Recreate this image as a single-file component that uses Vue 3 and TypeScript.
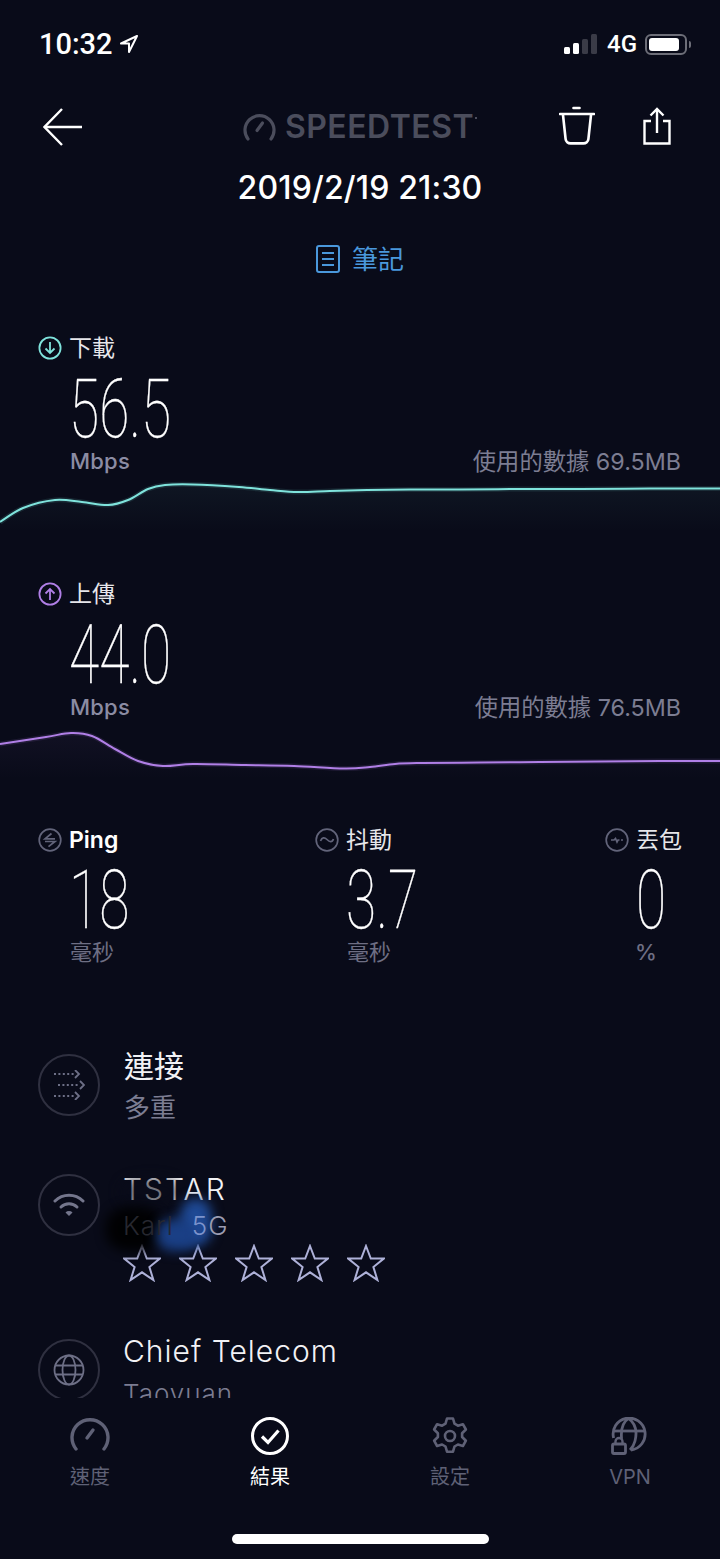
<script setup lang="ts">
type Point = [number, number]

// catmull-rom through the sampled points, good enough for the result curves
function smooth(points: Point[]): string {
  let d = `M${points[0][0]} ${points[0][1]}`
  for (let i = 0; i < points.length - 1; i++) {
    const p0 = points[i - 1] || points[i]
    const p1 = points[i]
    const p2 = points[i + 1]
    const p3 = points[i + 2] || p2
    const c1x = p1[0] + (p2[0] - p0[0]) / 6
    const c1y = p1[1] + (p2[1] - p0[1]) / 6
    const c2x = p2[0] - (p3[0] - p1[0]) / 6
    const c2y = p2[1] - (p3[1] - p1[1]) / 6
    d += ` C${c1x.toFixed(1)} ${c1y.toFixed(1)} ${c2x.toFixed(1)} ${c2y.toFixed(1)} ${p2[0]} ${p2[1]}`
  }
  return d
}

const downloadPoints: Point[] = [
  [0, 47], [23, 33], [55, 25], [82, 27], [108, 30], [128, 25], [148, 14], [165, 10], [193, 9.5],
  [239, 12], [270, 15], [298, 17], [330, 16], [367, 15], [410, 14.5], [459, 14.5], [520, 14],
  [580, 14], [650, 13.5], [720, 13.5]
]
const uploadPoints: Point[] = [
  [0, 23], [46, 16], [71, 12], [92, 15], [115, 28], [138, 40], [163, 45], [193, 43],
  [245, 44], [294, 45], [344, 47.5], [370, 46], [395, 43], [422, 42], [480, 41.5],
  [540, 41], [600, 40.5], [660, 40], [720, 40]
]

const results = [
  {
    key: 'down',
    label: '下載',
    value: '56.5',
    used: '使用的數據 69.5MB',
    color: '#7fe3dc',
    line: smooth(downloadPoints)
  },
  {
    key: 'up',
    label: '上傳',
    value: '44.0',
    used: '使用的數據 76.5MB',
    color: '#b07fe6',
    line: smooth(uploadPoints)
  }
]

const stats = [
  { key: 'ping', label: 'Ping', value: '18', unit: '毫秒' },
  { key: 'jitter', label: '抖動', value: '3.7', unit: '毫秒' },
  { key: 'loss', label: '丟包', value: '0', unit: '%' }
]

const tabs = [
  { key: 'speed', label: '速度' },
  { key: 'result', label: '結果' },
  { key: 'settings', label: '設定' },
  { key: 'vpn', label: 'VPN' }
]
</script>

<template>
  <div class="page">
    <div class="content">
      <div class="status">
        <div class="time">
          <span>10:32</span>
          <svg width="20" height="20" viewBox="0 0 20 20" fill="none" stroke="#fff" stroke-width="2" stroke-linejoin="round">
            <path d="M18 2 2 9.5h8V18z" />
          </svg>
        </div>
        <div class="status-right">
          <div class="signal">
            <i class="bar b1"></i>
            <i class="bar b2"></i>
            <i class="bar b3"></i>
            <i class="bar b4"></i>
          </div>
          <span class="net">4G</span>
          <div class="battery"><i></i></div>
          <i class="nub"></i>
        </div>
      </div>

      <div class="topbar">
        <svg class="back" width="40" height="38" viewBox="0 0 40 38" fill="none" stroke="#fff" stroke-width="2.4">
          <path d="M39 19H2" />
          <path d="M19 1 1.5 19 19 37" />
        </svg>
        <div class="logo">
          <svg width="33" height="28" viewBox="0 0 33 28" fill="none" stroke="#4b4d5c" stroke-width="3.2" stroke-linecap="round">
            <path d="M5 26A14.500 14.500 0 1 1 28 26" />
            <path d="M14 17.500 19.500 10" />
          </svg>
          <span class="logo-text">SPEEDTEST</span>
          <i class="logo-mark"></i>
        </div>
        <div class="actions">
          <svg width="36" height="40" viewBox="0 0 36 40" fill="none" stroke="#fff" stroke-width="2.6" stroke-linecap="round">
            <path d="M14.5 2h6" />
            <path d="M1 8h34" />
            <path d="M4 9l2.6 24a5 5 0 0 0 5 4.4h12.800a5 5 0 0 0 5-4.400L32 9" />
          </svg>
          <svg width="28" height="38" viewBox="0 0 28 38" fill="none" stroke="#fff" stroke-width="2.4">
            <path d="M14 26V2" />
            <path d="M7.5 8.5 14 2l6.5 6.5" />
            <path d="M8 14H1.5v22.500h25V14H20" />
          </svg>
        </div>
      </div>

      <div class="date">2019/2/19 21:30</div>

      <div class="notes">
        <svg width="24" height="28" viewBox="0 0 24 28" fill="none" stroke="#4a98dc" stroke-width="2">
          <rect x="1" y="1" width="22" height="26" rx="2" />
          <path d="M6 8h12M6 14h12M6 20h12" />
        </svg>
        <span>筆記</span>
      </div>

      <section v-for="r in results" :key="r.key" class="result">
        <div class="head">
          <svg width="24" height="24" viewBox="0 0 24 24" fill="none" :stroke="r.color" stroke-width="1.8">
            <circle cx="12" cy="12" r="10.6" />
            <path v-if="r.key === 'down'" d="M12 6v11M7.5 12.500 12 17l4.500-4.500" />
            <path v-else d="M12 18V7M7.5 11.500 12 7l4.500 4.500" />
          </svg>
          <span>{{ r.label }}</span>
        </div>
        <div class="big big-result">{{ r.value }}</div>
        <div class="meta">
          <span class="mbps">Mbps</span>
          <span class="used">{{ r.used }}</span>
        </div>
        <svg class="chart" width="720" height="104" viewBox="0 0 720 104" fill="none">
          <defs>
            <linearGradient :id="'fade-' + r.key" x1="0" y1="0" x2="0" y2="1">
              <stop offset="0" :stop-color="r.color" stop-opacity="0.05" />
              <stop offset="0.5" :stop-color="r.color" stop-opacity="0" />
            </linearGradient>
          </defs>
          <path :d="r.line + ' V104 H0 Z'" :fill="'url(#fade-' + r.key + ')'" />
          <path :d="r.line" :stroke="r.color" stroke-width="5" stroke-opacity="0.12" />
          <path :d="r.line" :stroke="r.color" stroke-width="2" />
        </svg>
      </section>

      <div class="stats">
        <div v-for="s in stats" :key="s.key" class="stat">
          <div class="stat-head">
            <svg width="24" height="24" viewBox="0 0 24 24" fill="none" stroke="#62647a" stroke-width="1.7">
              <circle cx="12" cy="12" r="10.8" />
              <template v-if="s.key === 'ping'">
                <path d="M13.5 5.500 7 10.800h10" />
                <path d="M7 13.500h10l-6.500 5.200" />
              </template>
              <path v-else-if="s.key === 'jitter'" d="M5.5 13c1.500-4 4-4 6.500-1.500S17 15 18.500 11" />
              <path v-else d="M6 12h3l1.500-1.500L12 14l1-2h1.500M16 12h2" />
            </svg>
            <span :class="s.key === 'ping' ? 'latin' : 'cjk'">{{ s.label }}</span>
          </div>
          <div class="big big-stat">{{ s.value }}</div>
          <div class="unit" :class="{ percent: s.key === 'loss' }">{{ s.unit }}</div>
        </div>
      </div>

      <div class="list">
        <div class="row">
          <div class="circle">
            <svg width="32" height="30" viewBox="0 0 32 30" fill="none" stroke="#6d6f86" stroke-width="1.8">
              <path d="M1 4h21" stroke-dasharray="2 2.4" />
              <path d="M5 15h21" stroke-dasharray="2 2.4" />
              <path d="M1 26h21" stroke-dasharray="2 2.4" />
              <path d="M22 0l4 4-4 4M27 11l4 4-4 4M22 22l4 4-4 4" />
            </svg>
          </div>
          <div>
            <div class="title">連接</div>
            <div class="sub">多重</div>
          </div>
        </div>

        <div class="row row-isp">
          <div class="circle circle-isp">
            <svg width="32" height="24" viewBox="0 0 32 24" fill="none" stroke="#74768c" stroke-width="3" stroke-linecap="round">
              <path d="M2 8a20 20 0 0 1 28 0" />
              <path d="M8 14a11.500 11.500 0 0 1 16 0" />
              <path d="M16 23l-3.500-3.500a5 5 0 0 1 7 0z" fill="#74768c" stroke="none" />
            </svg>
          </div>
          <div class="isp-text">
            <div class="title title-latin isp-title">TSTAR</div>
            <div class="sub sub-latin isp-sub"><span class="karl">Karl</span><span class="band">5</span><span class="band-g">G</span></div>
            <div class="stars">
              <svg v-for="n in 5" :key="n" width="38" height="38" viewBox="0 0 38 38" fill="none" stroke="#aeb1d8" stroke-width="2" stroke-linejoin="miter">
                <path d="M19 2l4.800 12.600h13L26.400 23l4 13L19 28.300 7.600 36l4-13L1.200 14.600h13z" />
              </svg>
            </div>
            <i class="smudge dim"></i>
            <i class="smudge dark"></i>
            <i class="smudge blue"></i>
            <i class="smudge blue-low"></i>
          </div>
        </div>

        <div class="row">
          <div class="circle circle-server">
            <svg width="32" height="32" viewBox="0 0 32 32" fill="none" stroke="#6d6f86" stroke-width="1.8">
              <circle cx="16" cy="16" r="14.5" />
              <ellipse cx="16" cy="16" rx="6.5" ry="14.5" />
              <path d="M2 11.500h28M2 20.500h28" />
            </svg>
          </div>
          <div>
            <div class="title title-latin">Chief Telecom</div>
            <div class="sub sub-latin server-sub">Taoyuan</div>
          </div>
        </div>
      </div>
    </div>

    <div class="tabbar">
      <div class="tabs">
        <div v-for="t in tabs" :key="t.key" class="tab" :class="{ active: t.key === 'result' }">
          <svg v-if="t.key === 'speed'" width="40" height="38" viewBox="0 0 40 38" fill="none" stroke="#5f6176" stroke-width="3.4" stroke-linecap="round">
            <path d="M6 32A18 18 0 1 1 34 32" />
            <path d="M17 21l6-8" />
          </svg>
          <svg v-else-if="t.key === 'result'" width="40" height="38" viewBox="0 0 40 38" fill="none" stroke="#fff" stroke-width="3">
            <circle cx="20" cy="19" r="17.5" />
            <path d="M12 19.500l6 6 10.500-12" stroke-width="3.2" />
          </svg>
          <svg v-else-if="t.key === 'settings'" width="40" height="38" viewBox="0 0 40 38" fill="none" stroke="#5f6176" stroke-width="2.6" stroke-linejoin="round">
            <path d="M17 1.500h6l1.500 5.200 3.400 2 5-1.500 3 5.300-3.800 3.700v3.800l3.800 3.700-3 5.300-5-1.500-3.400 2-1.500 5.200h-6l-1.500-5.200-3.400-2-5 1.500-3-5.300 3.800-3.700v-3.800l-3.800-3.700 3-5.300 5 1.500 3.400-2z" />
            <circle cx="20" cy="19" r="5" />
          </svg>
          <svg v-else width="40" height="38" viewBox="0 0 40 38" fill="none" stroke="#5f6176" stroke-width="2.8">
            <path d="M3.600 21A16 16 0 1 1 21 33" />
            <path d="M11.600 22C10.500 11 13 5 18.500 1.400 25 6 27.500 14 25 24c-1 4-3 7-5 9" />
            <path d="M3 14h31" />
            <rect x="2.500" y="27" width="13" height="9.500" rx="1.500" />
            <path d="M5.500 27v-2.500a3.500 3.500 0 0 1 7 0V27" stroke-width="2.4" />
          </svg>
          <span>{{ t.label }}</span>
        </div>
      </div>
      <div class="home"></div>
    </div>
  </div>
</template>

<style>
html,
body {
  margin: 0;
  background: #090b19;
}
</style>

<style scoped>
.page {
  width: 720px;
  height: 1559px;
  display: flex;
  flex-direction: column;
  overflow: hidden;
  background: #090b19;
  color: #fff;
  font-family: Inter, "Noto Sans CJK TC", sans-serif;
}

.content {
  flex: 1;
  min-height: 0;
  overflow: hidden;
}

.status {
  height: 88px;
  display: flex;
  align-items: center;
  justify-content: space-between;
  padding: 0 29px 0 39px;
}

.time {
  display: flex;
  align-items: center;
  gap: 6px;
  font-family: Roboto, sans-serif;
  font-weight: 500;
  font-size: 29px;
}

.status-right {
  display: flex;
  align-items: center;
}

.signal {
  display: flex;
  align-items: flex-end;
  gap: 3px;
  height: 20px;
  margin-right: 10px;
}

.bar {
  width: 6px;
  border-radius: 1.5px;
  background: #fff;
}

.b1 { height: 7px; }
.b2 { height: 11px; }
.b3 { height: 15px; background: #3a3b47; }
.b4 { height: 20px; background: #3a3b47; }

.net {
  font-family: Roboto, sans-serif;
  font-weight: 500;
  font-size: 24px;
  margin-right: 8px;
}

.battery {
  box-sizing: border-box;
  width: 42px;
  height: 21px;
  border: 2px solid #6d6e78;
  border-radius: 6px;
  padding: 2px;
}

.battery i {
  display: block;
  width: 30px;
  height: 13px;
  border-radius: 3px;
  background: #fff;
}

.nub {
  width: 2px;
  height: 7px;
  margin-left: 2px;
  border-radius: 0 2px 2px 0;
  background: #6d6e78;
}

.topbar {
  margin-top: 20px;
  height: 38px;
  padding: 0 46px;
  display: grid;
  grid-template-columns: 1fr auto 1fr;
  align-items: center;
}

.back {
  margin-left: -3px;
}

.logo {
  display: flex;
  align-items: center;
  color: #4b4d5c;
}

.logo-text {
  margin-left: 9px;
  font-size: 32px;
  font-weight: 600;
  letter-spacing: 0.5px;
  line-height: 38px;
}

.logo-mark {
  width: 2px;
  height: 2px;
  margin: -18px 0 0 1px;
  background: #4b4d5c;
}

.actions {
  justify-self: end;
  display: flex;
  align-items: center;
  gap: 48px;
  margin: -2px 3px 0 0;
}

.date {
  margin-top: 22px;
  text-align: center;
  font-size: 32px;
  letter-spacing: 0.15px;
  font-weight: 500;
  line-height: 40px;
}

.notes {
  margin-top: 36px;
  height: 30px;
  display: flex;
  align-items: center;
  justify-content: center;
  gap: 12px;
  color: #4a98dc;
  font-size: 26px;
}

.notes span {
  margin-bottom: 4px;
}

.notes + .result {
  margin-top: 59px;
}

.head {
  height: 30px;
  padding-left: 38px;
  display: flex;
  align-items: center;
  gap: 7px;
  font-size: 23px;
  color: #e6e6ea;
}

.head span,
.stat-head .cjk {
  margin-bottom: 4px;
}

.big {
  font-family: Roboto, sans-serif;
  font-weight: 100;
  -webkit-text-stroke: 0.3px #fff;
  line-height: 58px;
  height: 58px;
  transform: scaleX(0.68);
  transform-origin: left center;
  white-space: nowrap;
}

.big-result {
  margin: 18px 0 0 69px;
  font-size: 81px;
}

.meta {
  height: 28px;
  margin-top: 8px;
  padding: 0 39px 0 70px;
  display: flex;
  align-items: center;
  justify-content: space-between;
}

.mbps {
  font-size: 22px;
  font-weight: 500;
  letter-spacing: 0.2px;
  color: #8b8ca3;
}

.used {
  font-size: 23.3px;
  color: #7c7d92;
  margin-top: -3px;
}

.chart {
  display: block;
}

.stats {
  display: grid;
  grid-template-columns: 277px 290px auto;
  padding-left: 38px;
}

.stat-head {
  height: 30px;
  display: flex;
  align-items: center;
  gap: 7px;
  font-size: 23px;
  color: #e6e6ea;
}

.stat-head .latin {
  font-weight: 600;
  color: #fff;
}

.big-stat {
  margin: 17px 0 0 31px;
  font-size: 81px;
}

.unit {
  height: 28px;
  margin: 8px 0 0 32px;
  line-height: 28px;
  font-size: 22px;
  color: #6e6f84;
}

.unit.percent {
  margin-left: 30px;
  font-weight: 500;
}

.list {
  margin-top: 80px;
  padding-left: 38px;
  display: flex;
  flex-direction: column;
  gap: 41px;
}

.row {
  display: flex;
  align-items: flex-start;
  gap: 24px;
}

.row-isp {
  padding-bottom: 8px;
}

.circle {
  box-sizing: border-box;
  flex-shrink: 0;
  width: 62px;
  height: 62px;
  margin-top: 8px;
  border: 2px solid #2f3040;
  border-radius: 50%;
  display: flex;
  align-items: center;
  justify-content: center;
}

.circle-isp {
  margin-top: 5px;
}

.title {
  font-size: 30px;
  line-height: 40px;
  color: #f2f2f5;
}

.title-latin {
  font-weight: 300;
  letter-spacing: 1px;
  margin-left: -1px;
}

.isp-title {
  letter-spacing: 2px;
}

.sub {
  font-size: 26px;
  line-height: 40px;
  margin-top: 2px;
  color: #7c7d92;
}

.sub-latin {
  font-weight: 300;
  line-height: 34px;
  font-size: 26px;
  letter-spacing: 1px;
  margin-left: -1px;
}

.server-sub {
  margin-top: 6px;
}

.isp-text {
  position: relative;
}

.isp-sub {
  position: relative;
  z-index: 1;
  margin-top: 0;
}

.karl {
  margin-right: 18px;
  color: #26272f;
}

.band {
  color: #7c93cc;
}

.band-g {
  color: #9a9cb2;
}

.stars {
  display: flex;
  gap: 18px;
  margin: 1px 0 0 -1px;
}

.smudge {
  position: absolute;
  border-radius: 40%;
  filter: blur(6px);
}

.smudge.dim {
  left: -4px;
  top: 8px;
  width: 60px;
  height: 30px;
  background: #090b19;
  opacity: 0.55;
}

.smudge.dark {
  left: -18px;
  top: 38px;
  width: 56px;
  height: 44px;
  background: #000;
  opacity: 0.9;
}

.smudge.blue {
  left: 56px;
  top: 30px;
  width: 32px;
  height: 46px;
  background: #1f4a96;
}

.smudge.blue-low {
  left: 33px;
  top: 50px;
  width: 40px;
  height: 32px;
  background: #1a3f85;
}

.tabbar {
  height: 161px;
  flex-shrink: 0;
  background: #090b19;
}

.tabs {
  padding-top: 19px;
  display: grid;
  grid-template-columns: repeat(4, 180px);
}

.tab {
  display: flex;
  flex-direction: column;
  align-items: center;
  gap: 8px;
  color: #5f6176;
  font-size: 20px;
  line-height: 28px;
}

.tab svg {
  display: block;
}

.tab.active {
  color: #fff;
}

.home {
  width: 257px;
  height: 10px;
  margin: 43px auto 0;
  border-radius: 5px;
  background: #fff;
}
</style>
